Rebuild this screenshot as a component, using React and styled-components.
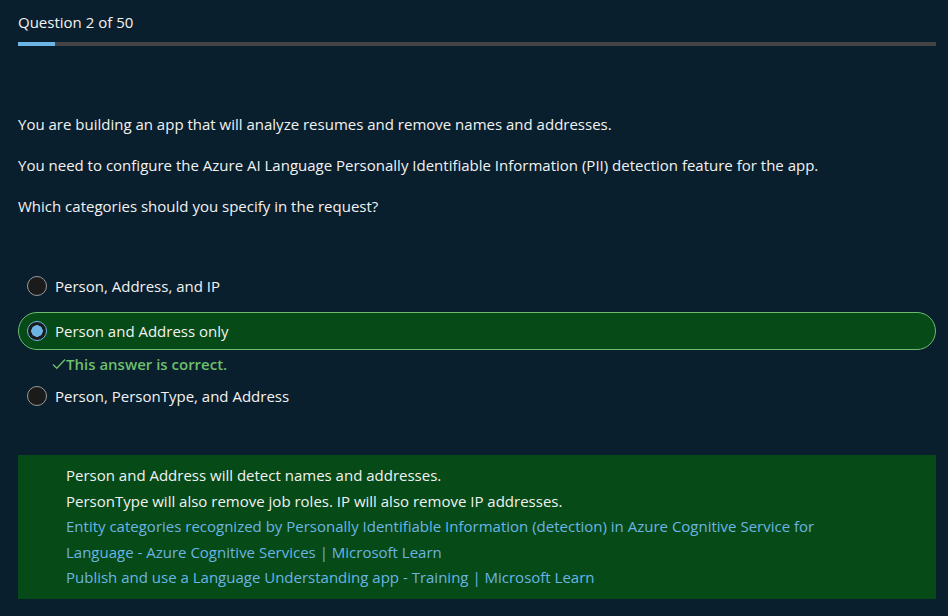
import styled, { createGlobalStyle } from "styled-components";

const GlobalStyle = createGlobalStyle`
  html, body {
    margin: 0;
    padding: 0;
    background: #0a1f2d;
  }
`;

const Page = styled.div`
  width: 948px;
  height: 616px;
  box-sizing: border-box;
  padding: 12px 12px 0 18px;
  background: #0a1f2d;
  color: #f2f2f2;
  font-family: "Open Sans", "Noto Sans", sans-serif;
  font-size: 15px;
  line-height: 20px;
  overflow: hidden;
`;

const Counter = styled.div``;

const Track = styled.div`
  margin-top: 10px;
  height: 4px;
  background: #444444;
`;

const Fill = styled.div`
  height: 100%;
  background: #6cb4e4;
`;

const Question = styled.div`
  margin-top: 68px;
  display: flex;
  flex-direction: column;
  gap: 21px;
`;

const Options = styled.div`
  margin-top: 51px;
  display: flex;
  flex-direction: column;
`;

const Option = styled.div`
  display: flex;
  align-items: center;
  gap: 8px;
  height: 38px;
  box-sizing: border-box;
  padding-left: 8px;
  border-radius: 19px;
  border: 1px solid ${(p) => (p.$correct ? "#6dbb6d" : "transparent")};
  background: ${(p) => (p.$correct ? "#054a17" : "transparent")};
  margin-top: ${(p) => (p.$correct ? "7px" : "0")};
`;

const Radio = styled.span`
  width: 20px;
  height: 20px;
  box-sizing: border-box;
  border-radius: 50%;
  flex-shrink: 0;
  border: 1px solid ${(p) => (p.$checked ? "#6cb4e4" : "#9a9a9a")};
  background: ${(p) =>
    p.$checked
      ? "radial-gradient(circle, #6cb4e4 0 5.5px, #1b1b1b 6px)"
      : "#1b1b1b"};
`;

const Feedback = styled.div`
  height: 27px;
  display: flex;
  align-items: center;
  padding-left: 34px;
  color: #6cbf6c;
  font-weight: 600;
  font-size: 15px;
`;

const Explanation = styled.div`
  margin-top: 40px;
  background: #054a17;
  padding: 8px 80px 8px 48px;
  line-height: 25.5px;
`;

const Line = styled.div``;

const Link = styled.a`
  display: block;
  color: #6cb4e4;
  text-decoration: none;
`;

const options = [
  { label: "Person, Address, and IP" },
  { label: "Person and Address only", correct: true },
  { label: "Person, PersonType, and Address" },
];

export default function App() {
  return (
    <>
      <GlobalStyle />
      <Page>
        <Counter>Question 2 of 50</Counter>
        <Track>
          <Fill style={{ width: `${(2 / 50) * 100}%` }} />
        </Track>
        <Question>
          <div>You are building an app that will analyze resumes and remove names and addresses.</div>
          <div>
            You need to configure the Azure AI Language Personally Identifiable Information (PII)
            detection feature for the app.
          </div>
          <div>Which categories should you specify in the request?</div>
        </Question>
        <Options>
          {options.map((o) => (
            <div key={o.label}>
              <Option $correct={o.correct}>
                <Radio $checked={o.correct} />
                <span>{o.label}</span>
              </Option>
              {o.correct && (
                <Feedback>
                  <svg width="14" height="12" viewBox="0 0 14 12" fill="none">
                    <path d="M1 6.5 L4.8 10.2 L13 1.5" stroke="#6cbf6c" strokeWidth="1.3" />
                  </svg>
                  This answer is correct.
                </Feedback>
              )}
            </div>
          ))}
        </Options>
        <Explanation>
          <Line>Person and Address will detect names and addresses.</Line>
          <Line>PersonType will also remove job roles. IP will also remove IP addresses.</Line>
          <Link href="#">
            Entity categories recognized by Personally Identifiable Information (detection) in
            Azure Cognitive Service for Language - Azure Cognitive Services | Microsoft Learn
          </Link>
          <Link href="#">Publish and use a Language Understanding app - Training | Microsoft Learn</Link>
        </Explanation>
      </Page>
    </>
  );
}
